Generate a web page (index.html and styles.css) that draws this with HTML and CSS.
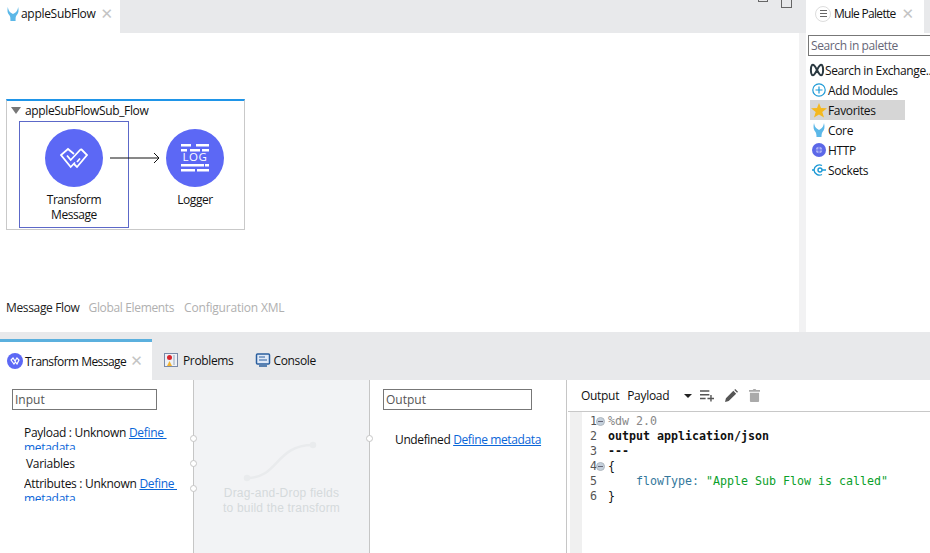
FILE: index.html
```html
<!DOCTYPE html>
<html lang="en">
<head>
<meta charset="utf-8">
<title>appleSubFlow</title>
<link rel="stylesheet" href="styles.css">
</head>
<body>
<div class="app">
  <section class="top">
    <div class="editor">
      <div class="tabstrip">
        <div class="tab file-tab">
          <svg class="mule" width="12" height="14" viewBox="0 0 14 15" preserveAspectRatio="none"><path fill="#5cb8e8" d="M1 0c.5 3 1.500 5 4 6.500L7 7.500l2-1C11.500 5 12.500 3 13 0c1 4 .5 7-2 9-1 1-1 3-1 6H4c0-3 0-5-1-6C.5 7 0 4 1 0z"/></svg>
          <span class="tab-label">appleSubFlow</span>
          <span class="close">✕</span>
        </div>
        <div class="winbtns"><span class="win-min"></span><span class="win-max"></span></div>
      </div>
      <div class="canvas">
        <div class="flow">
          <div class="flow-title"><span class="tri"></span>appleSubFlowSub_Flow</div>
          <div class="nodes">
            <div class="node selected">
              <span class="circle">
                <svg width="28" height="22" viewBox="0 0 28 22" fill="none" stroke="#fff" stroke-width="1.800"><path d="M14 7 8 2 1 8l9.700 12 4.300-4.500"/><path d="M21 2l6 6-10 12-3-3"/><path d="M21 2 10.700 13 7 8.500"/><path d="M17 15l3-3.500"/></svg>
              </span>
              <span class="node-label">Transform<br>Message</span>
            </div>
            <div class="arrow"><svg width="50" height="12" viewBox="0 0 50 12" fill="none" stroke="#111"><path d="M0 6h49M44 1l5 5-5 5"/></svg></div>
            <div class="node">
              <span class="circle">
                <svg width="28" height="28" viewBox="0 0 28 28" fill="#fff"><path d="M0 0h10v2.500H0zM15 0h13v2.500H15zM0 5h6v2.500H0zM9 5h10v2.500H9zM21 5h7v2.500h-7zM0 20h23v2.500H0zM24 20h4v2.500h-4zM0 25h14v2.500H0zM16 25h12v2.500H16z"/><text x="14" y="16.500" text-anchor="middle" font-family="Open Sans" font-size="11.500" letter-spacing=".6">LOG</text></svg>
              </span>
              <span class="node-label">Logger</span>
            </div>
          </div>
        </div>
        <nav class="subtabs">
          <span class="subtab on">Message Flow</span>
          <span class="subtab">Global Elements</span>
          <span class="subtab last">Configuration XML</span>
        </nav>
      </div>
    </div>
    <aside class="palette">
      <div class="palette-tabs">
        <div class="tab palette-tab">
          <span class="menu-ic"><i></i><i></i><i></i></span>
          <span class="tab-label">Mule Palette</span>
          <span class="close">✕</span>
        </div>
      </div>
      <div class="search">Search in palette</div>
      <ul class="plist">
        <li class="pitem exch"><svg class="ic16" viewBox="0 0 16 16" fill="none" stroke="#2b3a42" stroke-width="2"><path d="M3 3c-1.500 2-1.500 8 0 10 1.500 1 3-1 5-5s3.500-6 5-5c1.500 2 1.500 8 0 10-1.500 1-3-1-5-5S4.500 2 3 3z"/></svg>Search in Exchange...</li>
        <li class="pitem"><svg class="ic16" viewBox="0 0 16 16" fill="none" stroke="#1d9ad6" stroke-width="1.200"><circle cx="8" cy="8" r="6.200"/><path d="M8 4.500v7M4.500 8h7"/></svg>Add Modules</li>
        <li class="pitem fav"><svg class="ic16" viewBox="0 0 16 16"><path fill="#f4b81f" d="m8 1 2 5 6 .3-4.700 3.700 1.700 5.600L8 12.400l-5 3.200 1.700-5.600L0 6.300 6 6z"/></svg>Favorites</li>
        <li class="pitem"><svg class="ic16" viewBox="0 0 16 16"><path fill="#5cb8e8" d="M3 1c.5 3 1.500 5 3.500 6L8 8l1.500-1c2-1 3-3 3.500-6 1 4 .5 7-1.500 9-.8 1-1 3-1 5h-5c0-2-.2-4-1-5C2.500 8 2 5 3 1z"/></svg>Core</li>
        <li class="pitem"><svg class="ic16" viewBox="0 0 16 16"><circle cx="8" cy="8" r="7" fill="#5c68e8"/><circle cx="8" cy="8" r="3.200" fill="#aab0f5"/><path d="M4.500 8h7M8 4.500v7" stroke="#5c68e8"/></svg>HTTP</li>
        <li class="pitem"><svg class="ic16" viewBox="0 0 16 16" fill="none" stroke="#1d9ad6" stroke-width="1.400"><path d="M11 3.500a5.500 5.500 0 0 0-8 4.500 5.500 5.500 0 0 0 8 4.500"/><circle cx="9" cy="8" r="2"/><path d="M1 8h2M11 8h4"/></svg>Sockets</li>
      </ul>
    </aside>
  </section>

  <section class="bottom">
    <div class="btabs">
      <div class="btab active">
        <span class="dot"><svg width="10" height="8" viewBox="0 0 10 8" fill="none" stroke="#fff" stroke-width="1.200"><path d="M1 3l3 4 1.500-2L7 7l2-4-2-2-2 3-2-3z"/></svg></span>
        <span>Transform Message</span>
        <span class="close">✕</span>
      </div>
      <div class="btab">
        <svg class="ic16" viewBox="0 0 16 16"><rect x="1.500" y="1.500" width="13" height="13" fill="#eef1f6" stroke="#7a8aa8"/><circle cx="6.500" cy="5.500" r="2.500" fill="#d8242c"/><path d="M4 14l2.500-5L9 14z" fill="#f2b330"/><path d="M11 3v10" stroke="#9ab"/></svg>
        <span>Problems</span>
      </div>
      <div class="btab">
        <svg class="ic16" viewBox="0 0 16 16"><rect x="1.500" y="2" width="13" height="10" rx="1" fill="#dfe9f7" stroke="#2b5f9e" stroke-width="1.500"/><path d="M4 5h6M4 8h8" stroke="#2b5f9e"/><path d="M4 14h8" stroke="#2b5f9e" stroke-width="1.500"/></svg>
        <span>Console</span>
      </div>
    </div>
    <div class="panes">
      <div class="pane input-pane">
        <div class="field">Input</div>
        <div class="meta">Payload : Unknown <a href="#">Define&nbsp;<br>metadata</a></div>
        <div class="vars">Variables</div>
        <div class="meta attr">Attributes : Unknown <a href="#">Define&nbsp;<br>metadata</a></div>
      </div>
      <div class="mapping">
        <span class="port p1"></span><span class="port p2"></span><span class="port p3"></span><span class="port p4"></span>
        <svg class="curve" width="80" height="44" viewBox="0 0 80 44" fill="none" stroke="#e9ebed" stroke-width="2.500" stroke-linecap="round"><path d="M5 39c32 0 28-33 66-33"/><circle cx="5" cy="39" r="2" fill="#e9ebed"/><circle cx="71" cy="6" r="2" fill="#e9ebed"/></svg>
        <p class="hint">Drag-and-Drop fields<br>to build the transform</p>
      </div>
      <div class="pane output-pane">
        <div class="field">Output</div>
        <div class="undef">Undefined <a href="#">Define metadata</a></div>
      </div>
      <div class="code-pane">
        <div class="toolbar">
          <span>Output</span><span class="payload">Payload</span><span class="caret"></span>
          <svg class="tool" width="14" height="13" viewBox="0 0 15 13" fill="#555"><path d="M0 1h10v1.500H0zM0 5h10v1.500H0zM0 9h6v1.500H0zM11 6h1.500v3H15v1.500h-2.500V13H11v-2.500H8V9h3z"/></svg>
          <svg class="tool" width="13" height="13" viewBox="0 0 14 14" fill="#555"><path d="M0 14l1-4 8-8 3 3-8 8zM10 1l1-1 3 3-1 1z"/></svg>
          <svg class="tool" width="11" height="13" viewBox="0 0 12 14" fill="#aaa"><path d="M0 1h4l1-1h2l1 1h4v2H0zM1 4h10v9a1 1 0 0 1-1 1H2a1 1 0 0 1-1-1z"/></svg>
        </div>
        <div class="code">
          <div class="line"><span class="num">1<i class="fold"></i></span><span class="dir">%dw 2.0</span></div>
          <div class="line"><span class="num">2</span><b>output application/json</b></div>
          <div class="line"><span class="num">3</span><b>---</b></div>
          <div class="line"><span class="num">4<i class="fold"></i></span><span>{</span></div>
          <div class="line"><span class="num">5</span><span><span class="key">    flowType:</span> <span class="str">"Apple Sub Flow is called"</span></span></div>
          <div class="line"><span class="num">6</span><span>}</span></div>
        </div>
      </div>
    </div>
  </section>
</div>
</body>
</html>
```
FILE: styles.css
```css
* { box-sizing: border-box; }
html, body { margin: 0; padding: 0; background: #fff; }
body { font-family: "Open Sans", "Noto Sans", sans-serif; font-size: 12px; color: #111; }
.app { width: 930px; height: 553px; overflow: hidden; display: flex; flex-direction: column; }
.ic16 { width: 16px; height: 16px; flex: none; }

/* top */
.top { height: 332px; display: flex; }
.editor { width: 806px; display: flex; flex-direction: column; flex: none; }
.tabstrip { height: 33px; background: #e8e9eb; display: flex; }
.tab { background: #fff; display: flex; align-items: center; padding-bottom: 6px; }
.file-tab { width: 120px; padding-left: 7px; gap: 2px; }
.tab-label { font-size: 12px; letter-spacing: -.3px; }
.close { color: #c4c4c4; font-size: 15px; margin-left: 3px; line-height: 14px; font-family: "DejaVu Sans", sans-serif; }
.winbtns { margin-left: auto; display: flex; align-items: flex-start; gap: 13px; padding-right: 14px; }
.win-min { width: 10px; height: 2px; border: 1px solid #666; border-top: 0; }
.win-max { width: 11px; height: 8px; border: 1px solid #666; border-top: 0; }
.canvas { flex: 1; background: #fff; display: flex; flex-direction: column; padding: 66px 0 0 6px; border-right: 7px solid #f2f2f3; }
.flow { width: 239px; height: 131px; border: 1px solid #c9c9c9; border-top: 2px solid #1f95e8; padding: 0 0 0 12px; }
.flow-title { height: 18px; margin-bottom: 2px; display: flex; align-items: center; margin-left: -8px; letter-spacing: -.35px; }
.tri { width: 0; height: 0; border: 5px solid transparent; border-top: 7px solid #777; border-bottom: 0; margin-right: 4px; }
.nodes { display: flex; align-items: flex-start; }
.node { width: 110px; height: 107px; display: flex; flex-direction: column; align-items: center; padding-top: 7px; border: 1px solid transparent; }
.node.selected { border-color: #5c68c8; }
.node:last-child { width: 58px; margin-left: 6px; }
.circle { width: 58px; height: 58px; border-radius: 50%; background: #5c68f5; display: flex; align-items: center; justify-content: center; flex: none; }
.node-label { text-align: center; line-height: 15px; margin-top: 5px; letter-spacing: -.45px; white-space: nowrap; }
.arrow { margin: 31px 0 0 -19px; width: 50px; height: 12px; display: flex; }
.subtabs { margin-top: auto; display: flex; gap: 9px; padding-bottom: 16px; }
.subtab { color: #b0b0b0; letter-spacing: -.35px; }
.subtab.last { letter-spacing: -.2px; margin-left: 1px; }
.subtab.on { color: #222; }
.palette { flex: 1; display: flex; flex-direction: column; min-width: 0; }
.palette-tabs { height: 33px; display: flex; background: #e8e9eb; }
.palette-tab { width: 118px; padding-left: 9px; gap: 3px; }
.palette-tab .tab-label { letter-spacing: -.7px; }
.menu-ic { width: 16px; height: 16px; border: 1px solid #ddd; border-radius: 50%; display: flex; flex-direction: column; align-items: center; justify-content: center; gap: 2px; }
.menu-ic i { display: block; width: 7px; height: 1px; background: #666; }
.search { margin: 2px 0 0 2px; height: 21px; border: 1px solid #777; border-right: 0; padding-left: 2px; line-height: 20px; color: #667; white-space: nowrap; overflow: hidden; letter-spacing: -.4px; }
.plist { list-style: none; margin: 4px 0 0; padding: 0; }
.pitem { height: 20px; display: flex; align-items: center; gap: 1px; margin-left: 4px; width: 95px; white-space: nowrap; letter-spacing: -.35px; padding-left: 1px; }
.pitem.fav { background: #d6d6d6; }
.pitem.exch { gap: 0; margin-left: 3px; padding-left: 0; width: auto; letter-spacing: -.4px; overflow: hidden; }

/* bottom */
.bottom { flex: 1; display: flex; flex-direction: column; background: #e8e9eb; padding-top: 7px; min-height: 0; }
.btabs { height: 41px; display: flex; flex: none; }
.btab { display: flex; align-items: center; gap: 4px; padding: 1px 0 0 0; margin-right: 22px; letter-spacing: -.35px; }
.btab:last-child { gap: 2px; margin-right: 0; }
.btab.active { width: 152px; background: #fff; border-top: 3px solid #5bb0de; padding: 0 0 0 7px; margin-right: 11px; gap: 2px; letter-spacing: -.55px; }
.dot { width: 16px; height: 16px; border-radius: 50%; background: #5c68f5; display: flex; align-items: center; justify-content: center; flex: none; }
.btab .close { margin-left: 2px; }
.panes { flex: 1; display: flex; min-height: 0; background: #fff; }
.pane { width: 193px; flex: none; }
.field { height: 21px; border: 1px solid #777; padding-left: 2px; line-height: 19px; color: #555; background: #fff; }
.input-pane { padding: 9px 18px 0 12px; }
.input-pane .field { width: 145px; }
.meta { width: 155px; height: 25px; overflow: hidden; line-height: 15px; margin: 15px 0 0 12px; letter-spacing: -.3px; white-space: nowrap; }
.meta.attr { margin-top: 5px; }
.vars { margin: 6px 0 0 14px; height: 15px; line-height: 15px; letter-spacing: -.3px; }
a { color: #0a66d8; }
.mapping { width: 177px; flex: none; position: relative; background: #f2f3f5; border-left: 1px solid #c6c6c6; border-right: 1px solid #c6c6c6; display: flex; flex-direction: column; align-items: center; padding-top: 59px; }
.port { position: absolute; width: 7px; height: 7px; border-radius: 50%; background: #fff; border: 1px solid #c6c6c6; }
.p1 { left: -4px; top: 55px; }
.p2 { left: -4px; top: 80px; }
.p3 { left: -4px; top: 105px; }
.p4 { right: -4px; top: 55px; }
.curve { flex: none; }
.hint { margin: 3px 0 0; text-align: center; font-family: "Liberation Sans", sans-serif; font-size: 12px; line-height: 15px; color: #d5dadc; letter-spacing: .2px; }
.output-pane { width: 197px; padding: 9px 0 0 13px; border-right: 1px solid #c6c6c6; }
.output-pane .field { width: 149px; }
.undef { margin: 22px 0 0 12px; letter-spacing: -.37px; line-height: 15px; white-space: nowrap; }
.code-pane { flex: 1; min-width: 0; padding-left: 1px; }
.toolbar { height: 32px; border-bottom: 1px solid #c8c8c8; display: flex; align-items: center; padding-left: 13px; letter-spacing: -.3px; }
.payload { margin-left: 8px; }
.caret { width: 0; height: 0; border: 4px solid transparent; border-top: 4px solid #222; border-bottom: 0; margin: 0 0 0 15px; }
.tool { margin-left: 8px; flex: none; }
.tool + .tool { margin-left: 11px; }
.code { height: 141px; padding-top: 2px; font-family: "DejaVu Sans Mono", monospace; font-size: 11.630px; background: linear-gradient(90deg, #fff 0 2px, #f0f0f0 2px 14px, #fff 14px); }
.line { height: 15px; line-height: 15px; display: flex; white-space: pre; }
.num { width: 40px; flex: none; padding-left: 22px; color: #555; position: relative; }
.fold { position: absolute; left: 28px; top: 3px; width: 9px; height: 9px; border-radius: 50%; background: #c4d0dc; border: 1px solid #b0b8c0; }
.fold::after { content: ""; position: absolute; left: 1px; top: 3px; width: 5px; height: 1px; background: #667; }
.dir { color: #888; }
.key { color: #33789c; }
.str { color: #0aa02a; }
.line b { font-weight: 700; color: #111; }
```
